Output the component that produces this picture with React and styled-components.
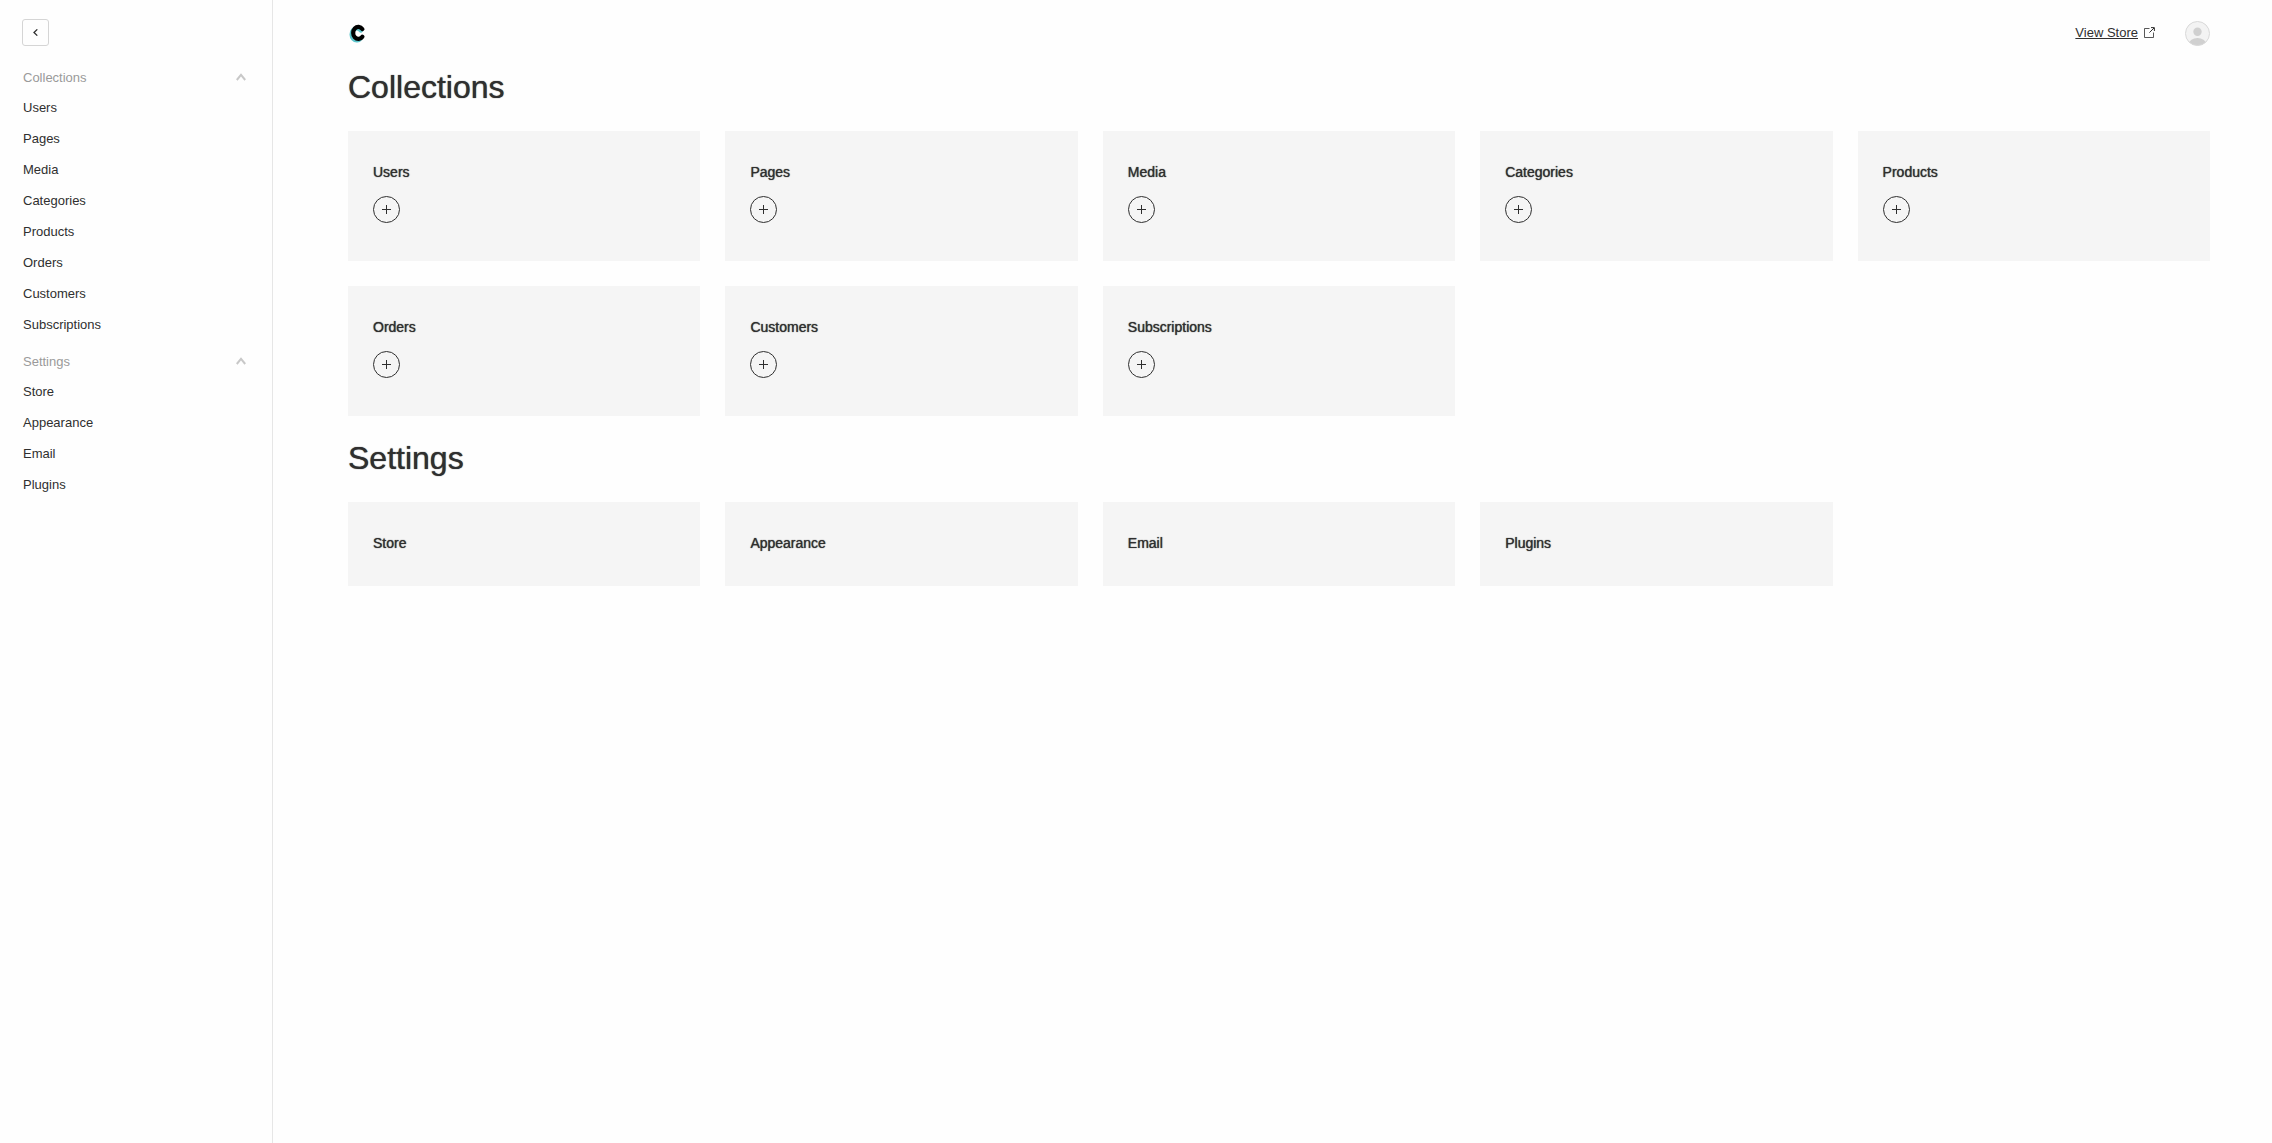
import styled, { createGlobalStyle } from "styled-components";
import { useState } from "react";

const collections = [
  "Users",
  "Pages",
  "Media",
  "Categories",
  "Products",
  "Orders",
  "Customers",
  "Subscriptions",
];
const settings = ["Store", "Appearance", "Email", "Plugins"];

const NavGroup = ({ label, items }) => {
  const [open, setOpen] = useState(true);
  return (
    <Group>
      <GroupToggle aria-expanded={open} onClick={() => setOpen((prev) => !prev)}>
        {label}
        <Chevron $open={open} width="10" height="10" viewBox="0 0 10 10">
          <path d="M.8 7 5 1.8 9.2 7" />
        </Chevron>
      </GroupToggle>
      {open && (
        <NavList>
          {items.map((item) => (
            <li key={item}>
              <NavLink href={`#${item.toLowerCase()}`}>{item}</NavLink>
            </li>
          ))}
        </NavList>
      )}
    </Group>
  );
};

const CardSection = ({ title, items, canCreate }) => (
  <section>
    <Heading>{title}</Heading>
    <Cards>
      {items.map((item) => (
        <Card key={item}>
          <CardTitle>{item}</CardTitle>
          {canCreate && (
            <AddButton aria-label={`Create new ${item}`}>
              <svg width="9" height="9" viewBox="0 0 9 9" stroke="currentColor">
                <path d="M4.5 0v9M0 4.5h9" />
              </svg>
            </AddButton>
          )}
        </Card>
      ))}
    </Cards>
  </section>
);

const Logo = () => (
  <svg
    width="18"
    height="20"
    viewBox="0 0 18 20"
    fill="none"
    strokeWidth="4.2"
    strokeLinecap="round"
  >
    <path stroke="#5cc4cb" d="M12.8 7.6A5.2 6 0 1 0 12.8 15.2" />
    <path stroke="#000" d="M14.4 6.1A5.2 6 0 1 0 14.4 13.7" />
  </svg>
);

const ExternalIcon = () => (
  <svg width="11" height="11" viewBox="0 0 11 11" fill="none" stroke="#2f2f2f">
    <path d="M5.5 1.5h-5v9h9V5.5" strokeWidth="0.8" />
    <path d="M5.4 5.6 10 1" />
    <path d="M7 .6h3.4V4" />
  </svg>
);

const Avatar = () => (
  <svg width="25" height="25" viewBox="0 0 25 25">
    <clipPath id="avatar">
      <circle cx="12.5" cy="12.5" r="12" />
    </clipPath>
    <circle cx="12.5" cy="12.5" r="12" fill="#f3f3f3" />
    <g fill="#d0d0d0" clipPath="url(#avatar)">
      <circle cx="12.5" cy="10.8" r="4.2" />
      <ellipse cx="12.5" cy="23.2" rx="8.6" ry="6.2" />
    </g>
    <circle cx="12.5" cy="12.5" r="12" fill="none" stroke="#d8d8d8" />
  </svg>
);

const App = () => (
  <Page>
    <GlobalStyle />
    <Sidebar>
      <CloseButton aria-label="Close menu">
        <svg width="5" height="7" viewBox="0 0 5 7" fill="none" stroke="#2f2f2f">
          <path d="M4.3.4 1 3.5l3.3 3.1" strokeWidth="1.3" />
        </svg>
      </CloseButton>
      <nav>
        <NavGroup label="Collections" items={collections} />
        <NavGroup label="Settings" items={settings} />
      </nav>
    </Sidebar>
    <Main>
      <Header>
        <HomeLink href="#" aria-label="Dashboard">
          <Logo />
        </HomeLink>
        <Actions>
          <StoreLink href="#store">
            <span>View Store</span>
            <ExternalIcon />
          </StoreLink>
          <AccountLink href="#account" aria-label="Account">
            <Avatar />
          </AccountLink>
        </Actions>
      </Header>
      <CardSection title="Collections" items={collections} canCreate />
      <CardSection title="Settings" items={settings} />
    </Main>
  </Page>
);

const GlobalStyle = createGlobalStyle`
  * {
    box-sizing: border-box;
  }
  body {
    margin: 0;
    background: #fefefe;
    color: #2f2f2f;
    font-family: "Liberation Sans", Arial, sans-serif;
    font-size: 13px;
    line-height: 15px;
  }
  button {
    padding: 0;
    background: none;
    color: inherit;
    font: inherit;
    cursor: pointer;
  }
  a {
    color: inherit;
  }
  svg {
    display: block;
  }
`;

const Page = styled.div`
  display: flex;
  min-height: 100vh;
`;

const Sidebar = styled.aside`
  flex: none;
  width: 273px;
  padding: 19px 26px 19px 22px;
  border-right: 1px solid #e6e6e6;
`;
const CloseButton = styled.button`
  display: flex;
  align-items: center;
  justify-content: center;
  width: 27px;
  height: 27px;
  margin-bottom: 21px;
  border: 1px solid #d5d5d5;
  border-radius: 3px;
`;

const Group = styled.div`
  padding: 0 0 11px 1px;
`;
const GroupToggle = styled.button`
  display: flex;
  align-items: center;
  justify-content: space-between;
  width: 100%;
  height: 21px;
  border: 0;
  color: #9a9a9a;
`;
const Chevron = styled.svg`
  fill: none;
  stroke: #c8c8c8;
  stroke-width: 2;
  transform: ${({ $open }) => ($open ? "none" : "rotate(180deg)")};
`;
const NavList = styled.ul`
  margin: 0;
  padding: 4px 0 0;
  list-style: none;
`;
const NavLink = styled.a`
  display: block;
  padding: 8px 0;
  text-decoration: none;
`;

const Main = styled.main`
  flex: 1;
  padding: 0 62px 60px 75px;
`;
const Header = styled.header`
  display: flex;
  align-items: center;
  justify-content: space-between;
  height: 45px;
  padding-top: 22px;
`;
const HomeLink = styled.a`
  display: block;
  padding-bottom: 2px;
`;
const AccountLink = styled.a`
  display: block;
`;
const Actions = styled.div`
  display: flex;
  align-items: center;
  gap: 30px;
`;
const StoreLink = styled.a`
  display: flex;
  align-items: center;
  gap: 6px;
  padding-bottom: 2px;
  text-decoration: none;

  span {
    text-decoration: underline;
    text-decoration-skip-ink: none;
    text-underline-offset: 1px;
  }
`;

const Heading = styled.h2`
  margin: 0;
  padding: 24px 0 26px;
  font-size: 32px;
  font-weight: 500;
  line-height: 36px;
  text-shadow: 0 0 1px currentColor;
`;
const Cards = styled.ul`
  display: grid;
  grid-template-columns: repeat(5, 1fr);
  gap: 25px;
  margin: 0;
  padding: 0;
  list-style: none;
`;
const Card = styled.li`
  padding: 25px;
  background: #f5f5f5;
`;
const CardTitle = styled.h3`
  margin: 0;
  padding-bottom: 2px;
  font-size: 14px;
  font-weight: 500;
  line-height: 32px;
  text-shadow: 0 0 1px currentColor;
`;
const AddButton = styled.button`
  display: flex;
  align-items: center;
  justify-content: center;
  width: 27px;
  height: 27px;
  margin: 6px 0 13px;
  border: 1px solid #2f2f2f;
  border-radius: 50%;
`;

export default App;
